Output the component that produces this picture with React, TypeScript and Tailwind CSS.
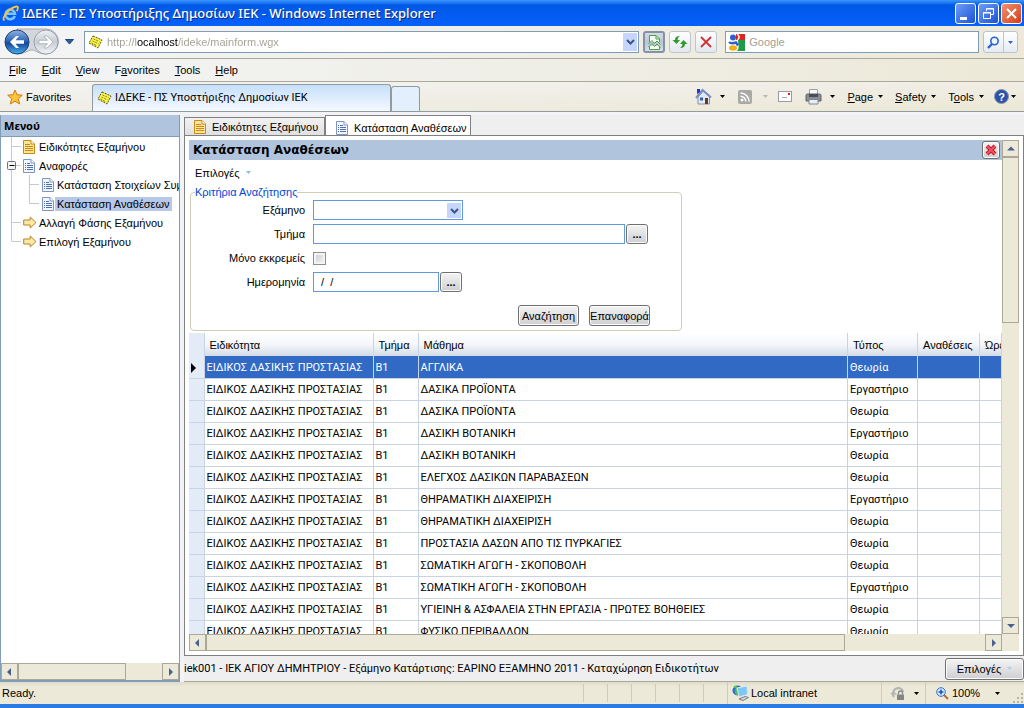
import { useState, ReactNode } from 'react'

type Row = { group: string; subject: string; kind: string }

const SPECIALTY = 'ΕΙΔΙΚΟΣ ΔΑΣΙΚΗΣ ΠΡΟΣΤΑΣΙΑΣ'

const rows: Row[] = [
  { group: 'Β1', subject: 'ΑΓΓΛΙΚΑ', kind: 'Θεωρία' },
  { group: 'Β1', subject: 'ΔΑΣΙΚΑ ΠΡΟΪΟΝΤΑ', kind: 'Εργαστήριο' },
  { group: 'Β1', subject: 'ΔΑΣΙΚΑ ΠΡΟΪΟΝΤΑ', kind: 'Θεωρία' },
  { group: 'Β1', subject: 'ΔΑΣΙΚΗ ΒΟΤΑΝΙΚΗ', kind: 'Εργαστήριο' },
  { group: 'Β1', subject: 'ΔΑΣΙΚΗ ΒΟΤΑΝΙΚΗ', kind: 'Θεωρία' },
  { group: 'Β1', subject: 'ΕΛΕΓΧΟΣ ΔΑΣΙΚΩΝ ΠΑΡΑΒΑΣΕΩΝ', kind: 'Θεωρία' },
  { group: 'Β1', subject: 'ΘΗΡΑΜΑΤΙΚΗ ΔΙΑΧΕΙΡΙΣΗ', kind: 'Εργαστήριο' },
  { group: 'Β1', subject: 'ΘΗΡΑΜΑΤΙΚΗ ΔΙΑΧΕΙΡΙΣΗ', kind: 'Θεωρία' },
  { group: 'Β1', subject: 'ΠΡΟΣΤΑΣΙΑ ΔΑΣΩΝ ΑΠΟ ΤΙΣ ΠΥΡΚΑΓΙΕΣ', kind: 'Θεωρία' },
  { group: 'Β1', subject: 'ΣΩΜΑΤΙΚΗ ΑΓΩΓΗ - ΣΚΟΠΟΒΟΛΗ', kind: 'Θεωρία' },
  { group: 'Β1', subject: 'ΣΩΜΑΤΙΚΗ ΑΓΩΓΗ - ΣΚΟΠΟΒΟΛΗ', kind: 'Εργαστήριο' },
  { group: 'Β1', subject: 'ΥΓΙΕΙΝΗ & ΑΣΦΑΛΕΙΑ ΣΤΗΝ ΕΡΓΑΣΙΑ - ΠΡΩΤΕΣ ΒΟΗΘΕΙΕΣ', kind: 'Θεωρία' },
  { group: 'Β1', subject: 'ΦΥΣΙΚΟ ΠΕΡΙΒΑΛΛΟΝ', kind: 'Θεωρία' },
]

/* ---------- icons ---------- */

function Caret({ color = '#000' }: { color?: string }) {
  return (
    <svg width="5" height="3" viewBox="0 0 5 3" className="shrink-0">
      <path d="M0 0h5L2.5 3z" fill={color} />
    </svg>
  )
}

function Chevron() {
  return (
    <svg width="9" height="6" viewBox="0 0 9 6">
      <path d="M1 1l3.5 3.5L8 1" fill="none" stroke="#3c5688" strokeWidth="2" />
    </svg>
  )
}

function IeLogo() {
  return (
    <svg width="17" height="17" viewBox="0 0 17 17" className="shrink-0">
      <path d="M12.800 11A4.800 4.800 0 1 1 13 8.700H4.500" fill="none" stroke="#7cc4fa" strokeWidth="2.600" />
      <path d="M2.500 15.500C-1.500 14 7 2.500 14.500 1.500c2.600-.2 1.200 3.200.2 4.700" fill="none" stroke="#f5c242" strokeWidth="1.800" />
    </svg>
  )
}

function NoteIcon() {
  return (
    <svg width="15" height="14" viewBox="0 0 15 14" className="shrink-0">
      <path d="M5 1l9 4-4 8-9-5z" fill="#fbf24a" />
      <path d="M5 1l9 4-4 8-9-5z" fill="none" stroke="#5a5614" strokeDasharray="2 1" />
      <path d="M5.500 4l6 2.600M4.500 6l6 2.800M3.500 8l5.500 2.800" stroke="#8a8424" strokeDasharray="2 1" />
    </svg>
  )
}

function DocIcon({ color }: { color: 'gold' | 'blue' }) {
  const line = color === 'gold' ? '#c98a12' : '#7d94c4'
  const text = color === 'gold' ? '#c98a12' : '#4c6cb4'
  const fill = color === 'gold' ? '#fbe3a0' : '#f3f6fd'
  return (
    <svg width="12" height="14" viewBox="0 0 12 14" className="shrink-0">
      <path d="M.5.5H8L11.500 4v9.500H.5z" fill={fill} stroke={line} />
      <path d="M8 .5V4h3.500" fill="#fff" stroke={line} />
      {color === 'gold' ? (
        <path d="M2 4.500h5M2 6.500h8M2 8.500h8M2 10.500h8" stroke={text} />
      ) : (
        <path d="M2 4.500h1M4 4.500h3M2 6.500h1M4 6.500h6M2 8.500h1M4 8.500h6M2 10.500h1M4 10.500h6" stroke={text} />
      )}
    </svg>
  )
}

function ArrowIcon() {
  return (
    <svg width="14" height="13" viewBox="0 0 14 13" className="shrink-0">
      <path d="M.7 4h6.500V1L13 6.500 7.200 12V9H.7z" fill="#fde7a9" stroke="#b98522" />
    </svg>
  )
}

function BackForward() {
  return (
    <svg width="58" height="28" viewBox="0 0 58 28" className="shrink-0">
      <defs>
        <linearGradient id="back" x1="0" y1="0" x2="0" y2="1">
          <stop offset="0" stopColor="#8fb4e4" />
          <stop offset=".45" stopColor="#2f66b5" />
          <stop offset=".55" stopColor="#17489a" />
          <stop offset="1" stopColor="#45b0ee" />
        </linearGradient>
        <linearGradient id="fwd" x1="0" y1="0" x2="0" y2="1">
          <stop offset="0" stopColor="#eef2f6" />
          <stop offset=".5" stopColor="#c6ccd4" />
          <stop offset="1" stopColor="#f4f6f8" />
        </linearGradient>
      </defs>
      <path d="M14 1h29a12 12 0 0 1 0 25c-8 0-10-4-14-4s-7 4-15 4z" fill="#d3d6da" stroke="#a9adb3" />
      <circle cx="14" cy="14" r="12" fill="url(#back)" stroke="#24406f" />
      <circle cx="43" cy="14" r="12" fill="url(#fwd)" stroke="#9aa2ad" />
      <path d="M7 14l6-6h3l-3.500 4.300H21v3.400h-8.500L16 20h-3z" fill="#fff" />
      <path d="M50 14l-6-6h-3l3.500 4.300H36v3.400h8.500L41 20h3z" fill="#fff" stroke="#a3acb8" strokeWidth=".8" />
    </svg>
  )
}

function CompatIcon() {
  return (
    <svg width="13" height="15" viewBox="0 0 13 15">
      <path d="M1.500 7V.5H8l3.500 3.500v3M1.500 11v3.500h10V11" fill="#f6faf4" stroke="#4aa33f" />
      <path d="M8 .5V4h3.500" fill="none" stroke="#4aa33f" />
      <path d="M.5 9L4 5.500l2.500 3L9 6l3.500 3.500M.5 12L4 8.500l2.500 3L9 9l3.500 3.500" fill="none" stroke="#4aa33f" />
    </svg>
  )
}

function RefreshIcon() {
  return (
    <svg width="16" height="14" viewBox="0 0 16 14">
      <path d="M8 1C4.500 1 3 2.500 3 5H.5l4 4 3.500-4H5.500C5.500 3.500 6.500 2 8 1z" fill="#2e9a2c" />
      <path d="M8 13c3.500 0 5-1.500 5-4h2.500l-4-4L8 9h2.500c0 1.500-1 3-2.500 4z" fill="#2e9a2c" />
    </svg>
  )
}

function GoogleIcon() {
  return (
    <svg width="17" height="17" viewBox="0 0 17 17" className="shrink-0">
      <path d="M8 0h9v6H8z" fill="#e0231c" />
      <path d="M10 6h7v11H9c3-3 1-6 1-11z" fill="#1f9a48" />
      <circle cx="5" cy="3.500" r="3" fill="#2b62cc" />
      <path d="M1 8c1.500 1.500 4 1.500 7 .5l2 3" fill="none" stroke="#2b62cc" strokeWidth="2.400" />
      <ellipse cx="5" cy="14" rx="4" ry="2.800" fill="#f5ae16" />
      <path d="M9 0c3 2 2.500 4 .5 6" fill="none" stroke="#fff" strokeWidth="1.500" />
    </svg>
  )
}

function SearchGlass() {
  return (
    <svg width="13" height="13" viewBox="0 0 13 13">
      <circle cx="7.500" cy="5" r="3.700" fill="#eaf3ff" stroke="#2b63d2" strokeWidth="1.600" />
      <path d="M5 8l-4 4" stroke="#2b63d2" strokeWidth="2.400" />
    </svg>
  )
}

function StarIcon() {
  return (
    <svg width="16" height="16" viewBox="0 0 16 16" className="shrink-0">
      <path d="M8 1l2 4.700 5.300.5-4 3.600 1.400 5.200L8 12.200 3.300 15l1.400-5.200-4-3.600L6 5.700z" fill="#fcc63c" stroke="#cf7d12" />
    </svg>
  )
}

function HomeIcon() {
  return (
    <svg width="17" height="17" viewBox="0 0 17 17">
      <path d="M3 9v7h11.500V8L8.500 3z" fill="#e3e8f1" stroke="#8791a5" />
      <path d="M1 10l6.500-8L16 9.500" fill="none" stroke="#7a8fc0" strokeWidth="2" />
      <path d="M2 1h3v3L2 6z" fill="#2036c4" />
      <path d="M5 9.500h3v3H5z" fill="#2d62b8" />
      <path d="M10 10h3v6h-3z" fill="#5a3c28" />
    </svg>
  )
}

function RssIcon() {
  return (
    <svg width="14" height="14" viewBox="0 0 14 14">
      <rect width="14" height="14" rx="2" fill="#a9a9a6" />
      <circle cx="4" cy="10" r="1.500" fill="#fff" />
      <path d="M2.500 6.200A5.300 5.300 0 0 1 7.800 11.500M2.500 3A8.500 8.500 0 0 1 11 11.500" fill="none" stroke="#fff" strokeWidth="1.500" />
    </svg>
  )
}

function MailIcon() {
  return (
    <svg width="14" height="11" viewBox="0 0 14 11">
      <rect x=".5" y=".5" width="13" height="10" fill="#fcfcff" stroke="#9b9ba8" />
      <path d="M10 2h2v2h-2z" fill="#d32222" />
      <path d="M4 6.500h5" stroke="#b7a3b5" />
    </svg>
  )
}

function PrinterIcon() {
  return (
    <svg width="17" height="16" viewBox="0 0 17 16">
      <path d="M4.500.5h8V6h-8z" fill="#f8f9fc" stroke="#9aa0aa" />
      <path d="M1 6.500C1 5.500 1.500 5 2.500 5h12c1 0 1.500.5 1.500 1.500V12H1z" fill="#8a8d92" stroke="#5f6267" />
      <path d="M4 5h9v3H4z" fill="#4a4d52" />
      <path d="M4 10.500h9V15H4z" fill="#e6effb" stroke="#7f8794" />
    </svg>
  )
}

function ZoneIcon() {
  return (
    <svg width="17" height="16" viewBox="0 0 17 16">
      <circle cx="5.500" cy="5.500" r="5" fill="#2c6fd0" />
      <path d="M2 2c3-1 3 2 2 4s2 3 1 4" fill="none" stroke="#5cc24e" strokeWidth="2" />
      <path d="M5 3l10-2 .5 8.500L7 12z" fill="#7cc8f5" stroke="#dfe6ee" />
      <path d="M7 14l6-2.500 3.500 1L11 15.500z" fill="#d8dade" stroke="#777d88" />
    </svg>
  )
}

function LockIcon() {
  return (
    <svg width="16" height="15" viewBox="0 0 16 15">
      <path d="M4 11C1.500 8 3 3 8 2c3 0 5 2 5 4" fill="none" stroke="#b3b3b0" strokeWidth="2" />
      <path d="M0 8l4-3 3 4z" fill="#b5b5b5" />
      <path d="M8.500 8.500V7a2 2 0 0 1 4 0v1.500" fill="none" stroke="#888" strokeWidth="1.300" />
      <rect x="7" y="8.500" width="7" height="5.500" fill="#858585" />
    </svg>
  )
}

function ZoomIcon() {
  return (
    <svg width="13" height="13" viewBox="0 0 13 13">
      <path d="M8 8l4 4" stroke="#b0702c" strokeWidth="2" />
      <circle cx="5" cy="5" r="4.300" fill="#d9ecff" stroke="#2f6fc4" />
      <path d="M5 2.500v5M2.500 5h5" stroke="#1c57c0" strokeWidth="1.600" />
    </svg>
  )
}

/* ---------- small parts ---------- */

const arrowPaths = {
  left: 'M6 1L2 5l4 4z',
  right: 'M3 1l4 4-4 4z',
  up: 'M1 6.500l4-4 4 4z',
  down: 'M1 3l4 4 4-4z',
}

function ScrollArrow({ dir }: { dir: keyof typeof arrowPaths }) {
  return (
    <button
      aria-label={dir}
      className="flex size-[17px] shrink-0 items-center justify-center border border-[#aca899] bg-[#ece9d8]"
    >
      <svg width="10" height="10" viewBox="0 0 10 10">
        <path d={arrowPaths[dir]} fill="#48618f" />
      </svg>
    </button>
  )
}

function ToolButton({ label, pressed, children }: { label: string; pressed?: boolean; children: ReactNode }) {
  return (
    <button
      aria-label={label}
      className={
        pressed
          ? 'flex h-[22px] w-[22px] items-center justify-center rounded-[3px] border-2 border-[#8293a8] bg-gradient-to-b from-[#d3dce6] via-[#b9c6d4] to-[#d8e0e8]'
          : 'flex h-[22px] w-[22px] items-center justify-center rounded-[3px] border border-[#bfc5cf] bg-gradient-to-b from-white to-[#e3e7ee]'
      }
    >
      {children}
    </button>
  )
}

function MenuWord({ text, hot }: { text: string; hot: number }) {
  return (
    <button>
      {text.slice(0, hot)}
      <span className="underline">{text[hot]}</span>
      {text.slice(hot + 1)}
    </button>
  )
}

function PushButton({ children, className }: { children: ReactNode; className: string }) {
  return (
    <button
      type="button"
      className={`flex items-center justify-center rounded-[3px] border border-[#707070] bg-gradient-to-b from-[#f4f4f4] to-[#cfcfd2] shadow-[inset_0_0_0_1px_#fcfcfc] ${className}`}
    >
      {children}
    </button>
  )
}

function RootBranch({ last, box }: { last?: boolean; box?: boolean }) {
  return (
    <svg width="22" height="19" viewBox="0 0 22 19" className="shrink-0">
      <path d={last ? 'M10.500 0v9.500H20' : 'M10.500 0v19M10.500 9.500H20'} fill="none" stroke="#c3cad6" />
      {box && (
        <>
          <rect x="6.500" y="5.500" width="8" height="8" rx="1" fill="#f4f3ee" stroke="#5d7391" />
          <path d="M8.500 9.500h5" stroke="#000" />
        </>
      )}
    </svg>
  )
}

function ChildBranch({ last }: { last?: boolean }) {
  return (
    <svg width="41" height="19" viewBox="0 0 41 19" className="shrink-0">
      <path d="M10.500 0v19" stroke="#c3cad6" />
      <path d={last ? 'M28.500 0v9.500H38' : 'M28.500 0v19M28.500 9.500H38'} fill="none" stroke="#c3cad6" />
    </svg>
  )
}

/* ---------- browser chrome ---------- */

function TitleBar() {
  return (
    <header className="flex h-[26px] shrink-0 items-center gap-[2px] bg-gradient-to-b from-[#3b96ff] via-[#0058e6] via-20% to-[#0660fb] px-[2px]">
      <IeLogo />
      <h1 className="ml-px flex-1 font-['Noto_Sans',sans-serif] text-[13px] leading-5 font-medium whitespace-nowrap text-white [text-shadow:1px_1px_#0a2a80]">
        ΙΔΕΚΕ - ΠΣ Υποστήριξης Δημοσίων ΙΕΚ - Windows Internet Explorer
      </h1>
      <button aria-label="Minimize" className="size-[21px] rounded-[3px] border border-white bg-gradient-to-br from-[#6f9cf5] to-[#1b4fd8]">
        <svg width="19" height="19" viewBox="0 0 19 19">
          <path d="M4 13h7v3H4z" fill="#fff" />
        </svg>
      </button>
      <button aria-label="Restore" className="size-[21px] rounded-[3px] border border-white bg-gradient-to-br from-[#6f9cf5] to-[#1b4fd8]">
        <svg width="19" height="19" viewBox="0 0 19 19" fill="none" stroke="#fff">
          <path d="M7.500 7V4.500h7v6H12M7 5h8" />
          <path d="M4.500 8.500h7v6h-7zM4 9h8" />
        </svg>
      </button>
      <button aria-label="Close" className="size-[21px] rounded-[3px] border border-white bg-gradient-to-br from-[#f0906f] to-[#d23a12]">
        <svg width="19" height="19" viewBox="0 0 19 19">
          <path d="M5 5l9 9M14 5l-9 9" stroke="#fff" strokeWidth="2" />
        </svg>
      </button>
    </header>
  )
}

function AddressBar() {
  return (
    <div className="flex h-[33px] shrink-0 items-center gap-1 border-b border-[#aca899] bg-gradient-to-r from-[#f3f4f6] to-[#ece9d8] pr-[6px] pl-[3px]">
      <BackForward />
      <button aria-label="Recent pages">
        <svg width="9" height="6" viewBox="0 0 9 6">
          <path d="M.5.5h8L4.500 5z" fill="#2c5f9e" stroke="#1c4778" />
        </svg>
      </button>
      <div className="ml-[6px] flex h-[22px] flex-1 items-center gap-1 border border-[#7f9db9] bg-white pr-px pl-[3px]">
        <NoteIcon />
        <input
          aria-label="Address"
          defaultValue="http://localhost/ideke/mainform.wgx"
          className="min-w-0 flex-1 bg-[linear-gradient(90deg,#a29f92_30px,#000_30px,#000_71px,#a29f92_71px)] bg-clip-text text-transparent outline-none"
        />
        <button aria-label="Address list" className="flex h-[18px] w-[14px] items-center justify-center bg-[#c5d5fb]">
          <Chevron />
        </button>
      </div>
      <ToolButton label="Compatibility view" pressed>
        <CompatIcon />
      </ToolButton>
      <ToolButton label="Refresh">
        <RefreshIcon />
      </ToolButton>
      <ToolButton label="Stop">
        <svg width="12" height="12" viewBox="0 0 12 12">
          <path d="M1 1l10 10M11 1L1 11" stroke="#cc3333" strokeWidth="1.800" />
        </svg>
      </ToolButton>
      <div className="ml-1 flex h-[22px] w-1/4 items-center gap-1 border border-[#7f9db9] bg-white pl-[2px]">
        <GoogleIcon />
        <input aria-label="Search" placeholder="Google" className="min-w-0 flex-1 outline-none placeholder:text-[#a29f92]" />
      </div>
      <div className="flex h-[22px] rounded-[3px] border border-[#b9c3d4] bg-gradient-to-b from-white to-[#e6ebf3]">
        <button aria-label="Go" className="flex w-5 items-center justify-center border-r border-[#b9c3d4]">
          <SearchGlass />
        </button>
        <button aria-label="Search options" className="flex w-[13px] items-center justify-center">
          <Caret color="#2b63d2" />
        </button>
      </div>
    </div>
  )
}

function MenuBar() {
  return (
    <nav className="flex h-[23px] shrink-0 items-center gap-[15px] border-b border-[#aca899] bg-gradient-to-r from-[#f3f4f6] to-[#ece9d8] px-[9px]">
      <MenuWord text="File" hot={0} />
      <MenuWord text="Edit" hot={0} />
      <MenuWord text="View" hot={0} />
      <MenuWord text="Favorites" hot={1} />
      <MenuWord text="Tools" hot={0} />
      <MenuWord text="Help" hot={0} />
    </nav>
  )
}

function CommandBar() {
  return (
    <div className="flex h-[30px] shrink-0 items-end border-b border-[#919b9c] bg-gradient-to-br from-[#f3f3f3] to-[#ece8d6]">
      <button className="flex h-[29px] w-[92px] items-center gap-[3px] pl-[7px]">
        <StarIcon />
        Favorites
      </button>
      <div className="flex h-[27px] w-[299px] items-center gap-[3px] rounded-t-[3px] border border-b-0 border-[#919b9c] bg-gradient-to-b from-[#c6dffb] to-[#f5f9ff] pl-1">
        <NoteIcon />
        <span className="font-['Roboto',sans-serif] whitespace-nowrap">ΙΔΕΚΕ - ΠΣ Υποστήριξης Δημοσίων ΙΕΚ</span>
      </div>
      <button
        aria-label="New tab"
        className="h-[25px] w-[29px] rounded-t-[3px] border border-b-0 border-[#919b9c] bg-[#e3effc]"
      />
      <div className="ml-auto flex h-[29px] items-center pr-2">
        <button aria-label="Home" className="flex items-center gap-2">
          <HomeIcon />
          <Caret />
        </button>
        <button aria-label="Feeds" className="ml-[13px] flex items-center gap-[11px]">
          <RssIcon />
          <Caret color="#b9b7aa" />
        </button>
        <button aria-label="Mail" className="ml-[10px]">
          <MailIcon />
        </button>
        <button aria-label="Print" className="ml-[13px] flex items-center gap-2">
          <PrinterIcon />
          <Caret />
        </button>
        <div className="ml-3 flex items-center gap-[5px]">
          <MenuWord text="Page" hot={0} />
          <Caret />
        </div>
        <div className="ml-3 flex items-center gap-[5px]">
          <MenuWord text="Safety" hot={0} />
          <Caret />
        </div>
        <div className="ml-3 flex items-center gap-[5px]">
          <MenuWord text="Tools" hot={1} />
          <Caret />
        </div>
        <button aria-label="Help" className="ml-[10px] flex items-center gap-[2px]">
          <span className="flex size-[15px] items-center justify-center rounded-full border border-[#8d96a8] bg-[#2b51a8] text-[11px] font-bold text-white">
            ?
          </span>
          <Caret />
        </button>
      </div>
    </div>
  )
}

/* ---------- application ---------- */

function Sidebar() {
  return (
    <aside className="flex w-[180px] shrink-0 flex-col border-r border-b-2 border-l border-[#7f9db9] bg-white">
      <h2 className="flex h-[21px] shrink-0 items-center bg-[#b0c4de] pl-[3px] font-['Noto_Sans',sans-serif] font-bold">Μενού</h2>
      <ul className="flex-1 overflow-hidden border-t border-[#7f9db9] whitespace-nowrap">
        <li className="flex h-[19px] items-center">
          <RootBranch />
          <DocIcon color="gold" />
          <a href="#" className="ml-1">Ειδικότητες Εξαμήνου</a>
        </li>
        <li className="flex h-[19px] items-center">
          <RootBranch box />
          <DocIcon color="blue" />
          <a href="#" className="ml-1">Αναφορές</a>
        </li>
        <li className="flex h-[19px] items-center">
          <ChildBranch />
          <DocIcon color="blue" />
          <a href="#" className="ml-[3px]">Κατάσταση Στοιχείων Συμ</a>
        </li>
        <li className="flex h-[19px] items-center">
          <ChildBranch last />
          <DocIcon color="blue" />
          <a href="#" className="ml-px h-[14px] bg-[#b6c7e8] px-[2px]">Κατάσταση Αναθέσεων</a>
        </li>
        <li className="flex h-[19px] items-center">
          <RootBranch />
          <ArrowIcon />
          <a href="#" className="ml-[2px]">Αλλαγή Φάσης Εξαμήνου</a>
        </li>
        <li className="flex h-[19px] items-center">
          <RootBranch last />
          <ArrowIcon />
          <a href="#" className="ml-[2px]">Επιλογή Εξαμήνου</a>
        </li>
      </ul>
      <div className="flex bg-[#ece9d8]">
        <ScrollArrow dir="left" />
        <div className="flex-1">
          <div className="h-[17px] w-3/4 border border-[#aca899]" />
        </div>
        <ScrollArrow dir="right" />
      </div>
    </aside>
  )
}

function TabStrip() {
  return (
    <div className="flex h-[20px] shrink-0 items-end bg-[#efefef]" role="tablist">
      <button
        role="tab"
        className="flex h-[18px] w-[141px] items-center gap-[6px] border border-b-0 border-[#808080] bg-gradient-to-b from-[#f2f2f2] to-[#e0e0e0] pl-[9px] whitespace-nowrap"
      >
        <DocIcon color="gold" />
        Ειδικότητες Εξαμήνου
      </button>
      <button
        role="tab"
        aria-selected="true"
        className="-mb-px flex h-[21px] w-[146px] items-center gap-[6px] border border-b-0 border-[#808080] bg-white pt-[3px] pl-[10px] whitespace-nowrap"
      >
        <DocIcon color="blue" />
        Κατάσταση Αναθέσεων
      </button>
    </div>
  )
}

function CriteriaForm() {
  const [pending, setPending] = useState(false)
  return (
    <form className="ml-px w-[492px]">
      <fieldset className="rounded-[4px] border border-[#cfcdb8] pb-1">
        <legend className="ml-1 leading-[14px] text-[#0046d5]">Κριτήρια Αναζήτησης</legend>
        <div className="grid auto-rows-[20px] grid-cols-[114px_1fr] items-center gap-x-2 gap-y-1 pt-px">
          <label htmlFor="semester" className="text-right">Εξάμηνο</label>
          <div className="relative w-[150px]">
            <select id="semester" className="h-5 w-full appearance-none border border-[#5f9ae0] bg-white">
              <option></option>
            </select>
            <span className="pointer-events-none absolute top-[3px] right-[2px] flex h-[15px] w-[14px] items-center justify-center bg-[#c5d5fb]">
              <Chevron />
            </span>
          </div>
          <label htmlFor="group" className="text-right">Τμήμα</label>
          <div className="flex gap-px">
            <input id="group" className="h-5 w-[312px] border border-[#5f9ae0] px-1" />
            <PushButton className="h-5 w-[22px] font-bold">...</PushButton>
          </div>
          <label htmlFor="pending" className="text-right">Μόνο εκκρεμείς</label>
          <input
            id="pending"
            type="checkbox"
            checked={pending}
            onChange={(e) => setPending(e.target.checked)}
            className="size-[13px] appearance-none border border-[#8e8f8f] bg-gradient-to-br from-[#c9ccd1] to-[#f5f5f5] shadow-[inset_0_0_0_2px_#f4f4f4] checked:bg-[#4a6fb5]"
          />
          <label htmlFor="date" className="text-right">Ημερομηνία</label>
          <div className="flex gap-px">
            <input id="date" defaultValue="/  /" className="h-5 w-[126px] border border-[#5f9ae0] px-[7px] whitespace-pre" />
            <PushButton className="h-5 w-[22px] font-bold">...</PushButton>
          </div>
        </div>
        <div className="mt-[13px] mr-[31px] flex justify-end gap-[10px]">
          <PushButton className="h-[21px] w-[61px]">Αναζήτηση</PushButton>
          <PushButton className="h-[21px] w-[61px]">Επαναφορά</PushButton>
        </div>
      </fieldset>
    </form>
  )
}

function CourseGrid() {
  const [selected, setSelected] = useState(0)
  return (
    <div className="mt-[2px] min-h-0 flex-1 overflow-hidden">
      <table className="w-full table-fixed border-collapse">
        <colgroup>
          <col className="w-[15px]" />
          <col className="w-[169px]" />
          <col className="w-[45px]" />
          <col />
          <col className="w-[70px]" />
          <col className="w-[62px]" />
          <col className="w-[22px]" />
        </colgroup>
        <thead>
          <tr className="h-[23px] bg-gradient-to-b from-white via-[#f4f6fa] to-[#d3dce8] text-left [&>th]:overflow-hidden [&>th]:border-r [&>th]:border-[#c8d4e4] [&>th]:p-0 [&>th]:pl-[5px] [&>th]:font-normal [&>th]:whitespace-nowrap">
            <th className="bg-[#e3ebf7]"></th>
            <th>Ειδικότητα</th>
            <th>Τμήμα</th>
            <th>Μάθημα</th>
            <th>Τύπος</th>
            <th>Αναθέσεις</th>
            <th>Ώρες</th>
          </tr>
        </thead>
        <tbody className="font-['Roboto',sans-serif]">
          {rows.map((row, i) => (
            <tr
              key={i}
              onClick={() => setSelected(i)}
              className={`h-[22px] [&>td]:overflow-hidden [&>td]:border-r [&>td]:border-b [&>td]:border-[#c8d4e4] [&>td]:p-0 [&>td]:pt-[2px] [&>td]:pl-[2px] [&>td]:whitespace-nowrap ${
                i === selected ? 'bg-[#316ac5] text-white' : 'bg-white'
              }`}
            >
              <td className="bg-[#e3ebf7]">
                {i === selected && (
                  <svg width="6" height="10" viewBox="0 0 6 10">
                    <path d="M0 0l5 5-5 5z" fill="#000" />
                  </svg>
                )}
              </td>
              <td>{SPECIALTY}</td>
              <td>{row.group}</td>
              <td>{row.subject}</td>
              <td>{row.kind}</td>
              <td></td>
              <td></td>
            </tr>
          ))}
        </tbody>
      </table>
    </div>
  )
}

function AssignmentsPanel() {
  return (
    <section className="flex min-h-0 flex-1 border border-[#808080] bg-white p-1">
      <div className="flex min-w-0 flex-1 flex-col">
        <div className="flex h-5 shrink-0 items-center justify-between bg-[#b0c4de] pr-[2px] pl-1">
          <h2 className="font-['DejaVu_Sans',sans-serif] text-[12px] font-bold">Κατάσταση Αναθέσεων</h2>
          <PushButton className="size-[18px]">
            <svg width="12" height="12" viewBox="0 0 12 12">
              <path d="M2 2l8 8M10 2l-8 8" stroke="#b81d2e" strokeWidth="4" />
              <path d="M2 2l8 8M10 2l-8 8" stroke="#f4525f" strokeWidth="2" />
            </svg>
          </PushButton>
        </div>
        <button className="flex h-[25px] shrink-0 items-center gap-[6px] pl-[6px]">
          Επιλογές
          <Caret color="#86bdf0" />
        </button>
        <CriteriaForm />
        <CourseGrid />
        <div className="flex shrink-0 bg-[#ece9d8]">
          <ScrollArrow dir="left" />
          <div className="flex-1">
            <div className="h-[17px] w-[82%] border border-[#aca899]" />
          </div>
          <ScrollArrow dir="right" />
        </div>
      </div>
      <div className="flex w-[17px] flex-col bg-[#ece9d8]">
        <ScrollArrow dir="up" />
        <div className="flex-1">
          <div className="h-[36%] border border-[#aca899]" />
        </div>
        <ScrollArrow dir="down" />
        <div className="h-[17px]" />
      </div>
    </section>
  )
}

function StatusBar() {
  return (
    <footer className="flex h-[26px] shrink-0 items-stretch border-b-4 border-[#2a7be4] bg-gradient-to-b from-[#dedbcb] to-[#ece9d8] to-20%">
      <span className="flex flex-1 items-center pl-[2px]">Ready.</span>
      <div className="flex py-[2px] [&>i]:w-6 [&>i]:border-l [&>i]:border-[#cfccbb]">
        <i />
        <i />
        <i />
        <i />
        <i />
        <i />
      </div>
      <div className="flex w-[154px] items-center gap-[2px] border-l border-[#cfccbb] pl-1">
        <ZoneIcon />
        Local intranet
      </div>
      <div className="flex w-11 items-center gap-2 border-l border-[#cfccbb] pl-2">
        <LockIcon />
        <Caret />
      </div>
      <button className="flex w-[99px] items-center gap-[3px] border-l border-[#cfccbb] pl-[10px]">
        <ZoomIcon />
        100%
        <span className="ml-3">
          <Caret />
        </span>
        <svg width="12" height="12" viewBox="0 0 12 12" className="mt-auto ml-auto">
          <path d="M9 1h2v2H9zM9 5h2v2H9zM9 9h2v2H9zM5 5h2v2H5zM5 9h2v2H5zM1 9h2v2H1z" fill="#b8b4a2" />
        </svg>
      </button>
    </footer>
  )
}

export default function App() {
  return (
    <div className="flex h-screen flex-col overflow-hidden bg-[#f2f3f7] font-['Liberation_Sans',sans-serif] text-[11px] leading-[14px] text-black">
      <TitleBar />
      <AddressBar />
      <MenuBar />
      <CommandBar />
      <main className="flex min-h-0 flex-1 gap-1 pt-[3px]">
        <Sidebar />
        <div className="flex min-w-0 flex-1 flex-col border-b border-[#aca899] bg-[#efefef]">
          <TabStrip />
          <AssignmentsPanel />
          <div className="flex h-[25px] shrink-0 items-center justify-between">
            <span className="font-['Roboto',sans-serif]">
              iek001 - ΙΕΚ ΑΓΙΟΥ ΔΗΜΗΤΡΙΟΥ - Εξάμηνο Κατάρτισης: ΕΑΡΙΝΟ ΕΞΑΜΗΝΟ 2011 - Καταχώρηση Ειδικοτήτων
            </span>
            <PushButton className="h-[22px] w-[79px] gap-[6px]">
              Επιλογές
              <Caret color="#a9cdf2" />
            </PushButton>
          </div>
        </div>
      </main>
      <StatusBar />
    </div>
  )
}
